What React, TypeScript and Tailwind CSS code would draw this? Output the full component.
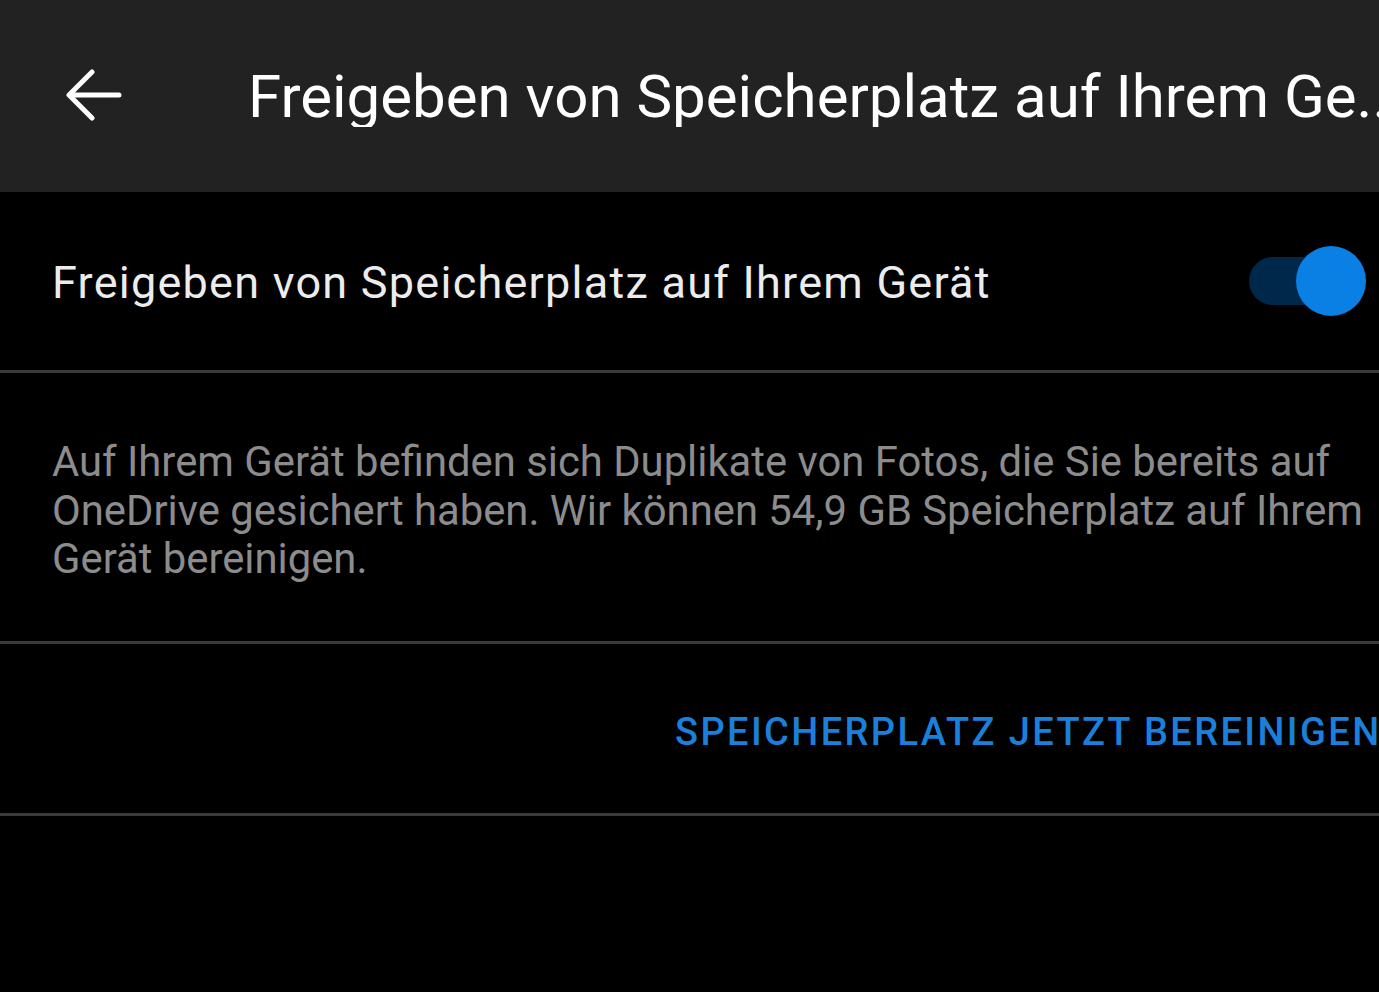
import React from "react";

function BackArrow() {
	return (
		<svg width="58" height="54" viewBox="0 0 58 54" fill="none">
			<path
				d="M54 26H6M27 3L4 26l23 23"
				stroke="white"
				strokeWidth="5"
				strokeLinecap="round"
				strokeLinejoin="round"
			/>
		</svg>
	);
}

function Toggle() {
	return (
		<div className="relative w-[118px] h-[70px] flex items-center">
			<div className="w-[82px] h-[48px] rounded-full bg-[#00284a]" />
			<div className="absolute left-[47px] top-0 w-[70px] h-[70px] rounded-full bg-[#0a80e4]" />
		</div>
	);
}

export default function App() {
	return (
		<div
			className="w-[1379px] h-[992px] bg-black overflow-hidden"
			style={{ fontFamily: "Roboto, 'Noto Sans', sans-serif" }}
		>
			<header className="h-[192px] bg-[#222222] flex items-center">
				<div className="w-[248px] pl-[65px] flex items-center">
					<BackArrow />
				</div>
				<h1 className="flex-1 text-white text-[60px] leading-none whitespace-nowrap overflow-hidden pt-[2px]">
					Freigeben von Speicherplatz auf Ihrem Ge..
				</h1>
			</header>

			<div className="h-[178px] flex items-center justify-between pl-[52px] pr-[12px]">
				<span className="text-[#ececec] text-[45px] tracking-[1.25px] leading-none pt-[3px]">
					Freigeben von Speicherplatz auf Ihrem Gerät
				</span>
				<Toggle />
			</div>
			<div className="h-[3px] bg-[#3a3a3a]" />

			<div className="h-[268px] flex items-center pl-[52px]">
				<p className="text-[#8c8c8c] text-[41.8px] leading-[48.5px] whitespace-nowrap pt-[8px]">
					Auf Ihrem Gerät befinden sich Duplikate von Fotos, die Sie bereits auf
					<br />
					OneDrive gesichert haben. Wir können 54,9 GB Speicherplatz auf Ihrem
					<br />
					Gerät bereinigen.
				</p>
			</div>
			<div className="h-[3px] bg-[#3a3a3a]" />

			<div className="h-[169px] flex items-center pl-[675px] overflow-hidden">
				<span className="text-[#1a80dc] text-[38px] tracking-[2.4px] font-medium leading-none whitespace-nowrap pt-[6px]">
					SPEICHERPLATZ JETZT BEREINIGEN
				</span>
			</div>
			<div className="h-[3px] bg-[#3a3a3a]" />
		</div>
	);
}
